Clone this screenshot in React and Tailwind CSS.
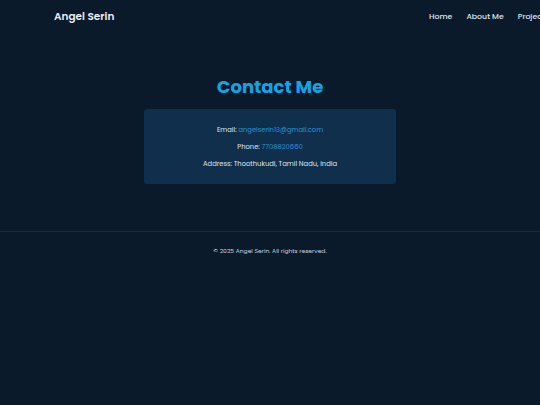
export default function App() {
  return (
    <div className="min-h-[405px] w-[540px] overflow-hidden bg-[#0a1a2a] text-[#e6edf3]" style={{ fontFamily: 'Poppins, Inter, "Noto Sans", sans-serif' }}>
      <header className="flex h-[34px] items-center justify-between pl-[54px] whitespace-nowrap">
        <div className="text-[10.5px] font-semibold text-[#e8eef5]">Angel Serin</div>
        <nav className="flex w-[111px] shrink-0 gap-[14px] overflow-hidden text-[7.8px] font-medium text-[#dfe7ef]">
          <span>Home</span>
          <span>About Me</span>
          <span>Projects</span>
        </nav>
      </header>
      <main className="flex flex-col items-center pt-[42px] pb-[47px]">
        <h1 className="text-[18px] leading-[22px] font-bold text-[#16a2e6]">Contact Me</h1>
        <div className="mt-[11px] flex h-[75px] w-[252px] flex-col items-center justify-center gap-[8px] rounded-[3px] bg-[#0f2f4c] text-[6.75px] leading-[9px] text-[#dfe7ef]">
          <p>Email: <span className="text-[#2795d9]">angelserin13@gmail.com</span></p>
          <p>Phone: <span className="text-[#2795d9]">7708820660</span></p>
          <p>Address: Thoothukudi, Tamil Nadu, India</p>
        </div>
      </main>
      <footer className="border-t border-[#1a2d40] pt-[15px] text-center text-[6px] text-[#c9d3dd]">
        © 2025 Angel Serin. All rights reserved.
      </footer>
    </div>
  );
}
